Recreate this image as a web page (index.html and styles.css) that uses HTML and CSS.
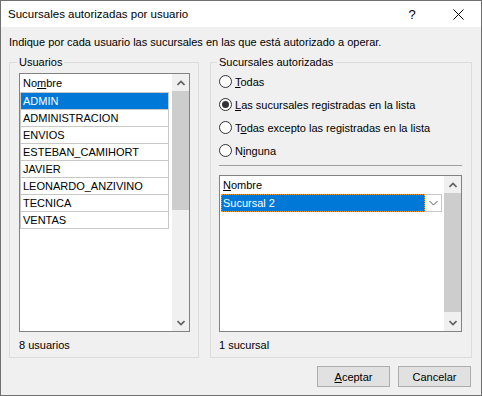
FILE: index.html
```html
<!DOCTYPE html>
<html lang="es">
<head>
    <meta charset="UTF-8">
    <title>Sucursales autorizadas por usuario</title>
    <link rel="stylesheet" href="styles.css">
</head>
<body>
    <div class="window">
        <div class="titlebar">
            <span class="title">Sucursales autorizadas por usuario</span>
            <span class="caption-btn help">?</span>
            <span class="caption-btn close">
                <svg width="11" height="11" viewBox="0 0 11 11">
                    <path d="M0.5 0.5L10.5 10.5M10.5 0.5L0.5 10.5" stroke="#000" stroke-width="1" fill="none"/>
                </svg>
            </span>
        </div>
        <div class="content">
            <p class="intro">Indique por cada usuario las sucursales en las que está autorizado a operar.</p>
            <div class="groups">
                <!-- Usuarios -->
                <fieldset class="group group-users">
                    <legend>Usuarios</legend>
                    <div class="listbox">
                        <div class="list-area">
                            <div class="list-header">No<u>m</u>bre</div>
                            <div class="rows">
                                <div class="row selected">ADMIN</div>
                                <div class="row">ADMINISTRACION</div>
                                <div class="row">ENVIOS</div>
                                <div class="row">ESTEBAN_CAMIHORT</div>
                                <div class="row">JAVIER</div>
                                <div class="row">LEONARDO_ANZIVINO</div>
                                <div class="row">TECNICA</div>
                                <div class="row">VENTAS</div>
                            </div>
                        </div>
                        <div class="scrollbar">
                            <div class="sb-btn">
                                <svg width="8" height="6" viewBox="0 0 8 6"><path d="M0.5 5L4 1.5L7.5 5" stroke="#606060" stroke-width="1.6" fill="none"/></svg>
                            </div>
                            <div class="sb-thumb"></div>
                            <div class="sb-track"></div>
                            <div class="sb-btn">
                                <svg width="8" height="6" viewBox="0 0 8 6"><path d="M0.5 1L4 4.5L7.5 1" stroke="#606060" stroke-width="1.6" fill="none"/></svg>
                            </div>
                        </div>
                    </div>
                    <div class="count">8 usuarios</div>
                </fieldset>

                <!-- Sucursales -->
                <fieldset class="group group-branches">
                    <legend>Sucursales autorizadas</legend>
                    <label class="option"><span class="radio"></span><span><u>T</u>odas</span></label>
                    <label class="option"><span class="radio checked"></span><span><u>L</u>as sucursales registradas en la lista</span></label>
                    <label class="option"><span class="radio"></span><span>T<u>o</u>das excepto las registradas en la lista</span></label>
                    <label class="option"><span class="radio"></span><span>N<u>i</u>nguna</span></label>
                    <div class="separator"></div>
                    <div class="listbox">
                        <div class="list-area">
                            <div class="list-header"><u>N</u>ombre</div>
                            <div class="edit-row">
                                <div class="edit-value">Sucursal 2</div>
                                <div class="edit-drop">
                                    <svg width="9" height="6" viewBox="0 0 9 6"><path d="M0.5 1L4.5 5L8.5 1" stroke="#555" stroke-width="1" fill="none"/></svg>
                                </div>
                            </div>
                        </div>
                        <div class="scrollbar">
                            <div class="sb-btn">
                                <svg width="8" height="6" viewBox="0 0 8 6"><path d="M0.5 5L4 1.5L7.5 5" stroke="#606060" stroke-width="1.6" fill="none"/></svg>
                            </div>
                            <div class="sb-thumb"></div>
                            <div class="sb-track"></div>
                            <div class="sb-btn">
                                <svg width="8" height="6" viewBox="0 0 8 6"><path d="M0.5 1L4 4.5L7.5 1" stroke="#606060" stroke-width="1.6" fill="none"/></svg>
                            </div>
                        </div>
                    </div>
                    <div class="count">1 sucursal</div>
                </fieldset>
            </div>
            <div class="buttons">
                <button class="btn"><u>A</u>ceptar</button>
                <button class="btn">Cancelar</button>
            </div>
        </div>
    </div>
</body>
</html>
```

FILE: styles.css
```css
body {
    margin: 0;
    font-family: "Liberation Sans", Arial, sans-serif;
    font-size: 11px;
    color: #000;
    background: #f0f0f0;
}

.window {
    width: 482px;
    height: 396px;
    box-sizing: border-box;
    border: 1px solid #707070;
    display: flex;
    flex-direction: column;
}

/* Barra de titulo */
.titlebar {
    height: 26px;
    background: #ffffff;
    display: flex;
    align-items: center;
}

.title {
    flex: 1;
    padding-left: 7px;
    font-size: 11.5px;
}

.caption-btn {
    width: 46px;
    height: 26px;
    display: flex;
    align-items: center;
    justify-content: center;
}

.help {
    font-size: 13px;
}

.content {
    flex: 1;
    background: #f0f0f0;
    padding: 7px 9px 8px 8px;
}

.intro {
    margin: 0;
    line-height: 16px;
}

.groups {
    display: flex;
    gap: 11px;
    height: 303px;
    margin-top: 5px;
}

/* Cuadros de grupo */
.group {
    margin: 0;
    min-width: 0;
    box-sizing: border-box;
    border: 1px solid #dcdcdc;
    display: flex;
    flex-direction: column;
}

.group legend {
    padding: 0 2px;
    margin-left: -2px;
    line-height: 14px;
}

.group-users {
    width: 190px;
    padding: 4px 8px 4px 9px;
}

.group-branches {
    width: 262px;
    padding: 1px 9px 4px 8px;
}

.option {
    display: flex;
    align-items: center;
    gap: 3px;
    height: 23px;
}

.radio {
    width: 13px;
    height: 13px;
    box-sizing: border-box;
    border: 1px solid #333;
    border-radius: 50%;
    background: #fff;
    display: flex;
    align-items: center;
    justify-content: center;
}

.radio.checked::after {
    content: "";
    width: 7px;
    height: 7px;
    border-radius: 50%;
    background: #333;
}

.separator {
    margin: 3px 0 9px;
    border-top: 1px solid #a0a0a0;
}

/* Listas */
.listbox {
    flex: 1;
    min-height: 0;
    display: flex;
    border: 1px solid #828282;
    background: #fff;
}

.list-area {
    flex: 1;
}

.list-header {
    height: 18px;
    line-height: 18px;
    padding-left: 3px;
}

.rows {
    width: 149px;
    border-bottom: 1px solid #c8c8c8;
}

.row {
    height: 16px;
    line-height: 16px;
    padding-left: 2px;
    border: 1px solid #c8c8c8;
    border-bottom: none;
}

.row.selected {
    background: #0078d7;
    color: #fff;
}

.edit-row {
    display: flex;
    height: 18px;
    width: 221px;
    margin-left: 1px;
}

.edit-value {
    flex: 1;
    background: #0078d7;
    color: #fff;
    border: 1px dotted #f0a030;
    line-height: 16px;
    padding-left: 1px;
}

.edit-drop {
    width: 17px;
    box-sizing: border-box;
    border: 1px solid #c8c8c8;
    border-left: none;
    display: flex;
    align-items: center;
    justify-content: center;
}

.scrollbar {
    width: 17px;
    background: #f0f0f0;
    display: flex;
    flex-direction: column;
}

.sb-btn {
    height: 17px;
    display: flex;
    align-items: center;
    justify-content: center;
}

.sb-thumb {
    height: 119px;
    background: #cdcdcd;
}

.sb-track {
    flex: 1;
}

.count {
    margin-top: 5px;
    line-height: 16px;
}

/* Botones */
.buttons {
    display: flex;
    justify-content: flex-end;
    gap: 8px;
    margin-top: 8px;
    padding-right: 1px;
}

.btn {
    width: 73px;
    height: 21px;
    box-sizing: border-box;
    background: #e1e1e1;
    border: 1px solid #adadad;
    font-family: inherit;
    font-size: 11px;
    color: #000;
    padding: 0;
}
```
